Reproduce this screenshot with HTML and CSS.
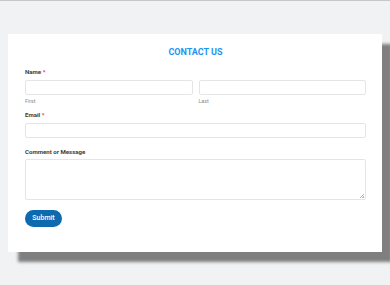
FILE: index.html
```html
<!DOCTYPE html>
<html lang="en">

<head>
    <meta charset="UTF-8">
    <meta name="viewport" content="width=device-width, initial-scale=1.0">
    <title>Contact Us</title>

    <link rel="stylesheet" href="styles.css">
</head>

<body>

    <section class="contact-card">
        <h2 class="contact-title">CONTACT US</h2>

        <form class="contact-form">
            <div class="field field-name">
                <label class="field-label">Name <span class="required">*</span></label>
                <div class="name-row">
                    <div class="name-col">
                        <input type="text" class="field-input">
                        <span class="sub-label">First</span>
                    </div>
                    <div class="name-col">
                        <input type="text" class="field-input">
                        <span class="sub-label">Last</span>
                    </div>
                </div>
            </div>

            <div class="field field-email">
                <label class="field-label">Email <span class="required">*</span></label>
                <input type="email" class="field-input">
            </div>

            <div class="field field-message">
                <label class="field-label">Comment or Message</label>
                <div class="textarea-wrap">
                    <textarea class="field-input field-textarea"></textarea>
                    <span class="resize-grip"></span>
                </div>
            </div>

            <button type="button" class="submit-button">Submit</button>
        </form>
    </section>

</body>

</html>
```

FILE: styles.css
```css
/* Página */
html {
    background-color: #f1f2f4;
}

body {
    margin: 0;
    padding-bottom: 33px;
    background-color: #f1f2f4;
    border-top: 1px solid #c6c7c9;
    font-family: Roboto, "Liberation Sans", sans-serif;
}

/* Tarjeta del formulario */
.contact-card {
    margin: 33px 8px 0 8px;
    padding: 13px 16px 25px 17px;
    background-color: #fff;
    box-shadow: 10px 10px 3px #7f7f7f;
}

.contact-title {
    margin: 0;
    font-size: 9px;
    line-height: 11px;
    font-weight: 700;
    text-align: center;
    color: #1d95f2;
}

/* Campos */
.field-label {
    display: block;
    font-size: 6.1px;
    line-height: 8px;
    font-weight: 700;
    color: #3c3c3c;
}

.required {
    color: #d63638;
}

.field-input {
    display: block;
    box-sizing: border-box;
    width: 100%;
    height: 15px;
    margin: 0;
    border: 1px solid #e4e5e7;
    border-radius: 2px;
    background: #fff;
    font: inherit;
}

.field-name {
    margin-top: 9.5px;
}

.field-name .field-label {
    margin-bottom: 4px;
}

.name-row {
    display: flex;
    gap: 6px;
}

.name-col {
    flex: 1;
}

.sub-label {
    display: block;
    margin-top: 3px;
    font-size: 5.3px;
    line-height: 7px;
    color: #8a8a8a;
}

.field-email {
    margin-top: 6.5px;
}

.field-email .field-label {
    margin-bottom: 4.3px;
}

.field-email .field-input {
    height: 14.5px;
}

.field-message {
    margin-top: 10.7px;
}

.field-message .field-label {
    margin-bottom: 2.6px;
}

.textarea-wrap {
    position: relative;
}

.field-textarea {
    height: 41px;
    resize: none;
}

/* Asa de redimensionar (pequeña, gris claro) */
.resize-grip {
    position: absolute;
    right: 2px;
    bottom: 2px;
    width: 4px;
    height: 4px;
    background: linear-gradient(135deg, transparent 45%, #b5b5b5 45%, #b5b5b5 60%, transparent 60%, transparent 75%, #b5b5b5 75%);
}

/* Botón */
.submit-button {
    display: block;
    margin-top: 10px;
    width: 37px;
    height: 16.5px;
    padding: 0;
    border: none;
    border-radius: 9px;
    background-color: #0d6aae;
    color: #fff;
    font-family: inherit;
    font-size: 7px;
    font-weight: 500;
    cursor: pointer;
}
```
